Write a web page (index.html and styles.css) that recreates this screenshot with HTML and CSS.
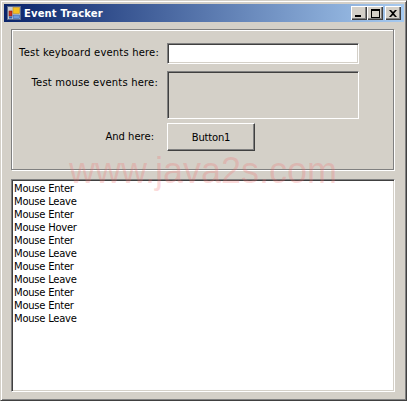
FILE: index.html
```html
<html>

<head>
    <link rel="stylesheet" href="styles.css">
</head>

<body>
    <div class="window">
        <div class="title-bar">
            <svg class="app-icon" viewBox="0 0 14 14" width="14" height="14">
                <rect x="0.5" y="0.5" width="13" height="13" fill="#c8ccd4" stroke="#5a6a8c"/>
                <rect x="6" y="1.5" width="6.500" height="6" fill="#f4c020" stroke="#c09020" stroke-width="0.6"/>
                <rect x="2" y="5" width="3" height="5" fill="#d03020" stroke="#802010" stroke-width="0.6"/>
                <rect x="2" y="10.500" width="3" height="2" fill="#3060b0"/>
                <rect x="6" y="9" width="6.500" height="3.500" fill="#6f9ad8" stroke="#3060b0" stroke-width="0.6"/>
            </svg>
            <span class="title-text">Event Tracker</span>
            <div class="caption-buttons">
                <button class="caption-btn" title="minimize"><span class="min-glyph"></span></button>
                <button class="caption-btn" title="maximize"><span class="max-glyph"></span></button>
                <button class="caption-btn close-btn" title="close">
                    <svg viewBox="0 0 8 7" width="8" height="7">
                        <path d="M0 0h2l2 2 2-2h2L5 3.500 8 7H6L4 5 2 7H0l3-3.500z" fill="#000"/>
                    </svg>
                </button>
            </div>
        </div>

        <div class="client">
            <div class="panel">
                <label class="form-label key-label">Test keyboard events here:</label>
                <input class="key-input" type="text">
                <label class="form-label mouse-label">Test mouse events here:</label>
                <div class="mouse-box"></div>
                <label class="form-label here-label">And here:</label>
                <button class="push-btn">Button1</button>
            </div>

            <div class="log-list">
                <div>Mouse Enter</div>
                <div>Mouse Leave</div>
                <div>Mouse Enter</div>
                <div>Mouse Hover</div>
                <div>Mouse Enter</div>
                <div>Mouse Leave</div>
                <div>Mouse Enter</div>
                <div>Mouse Leave</div>
                <div>Mouse Enter</div>
                <div>Mouse Enter</div>
                <div>Mouse Leave</div>
            </div>
        </div>
    </div>
    <div class="watermark">www.java2s.com</div>
</body>

</html>
```

FILE: styles.css
```css
html,
body {
    margin: 0;
    padding: 0;
}

body {
    width: 407px;
    height: 401px;
    overflow: hidden;
    font-family: "DejaVu Sans", sans-serif;
    font-size: 10px;
    color: #000;
}

.window {
    box-sizing: border-box;
    width: 407px;
    height: 401px;
    padding: 3px 2px 2px 3px;
    background: #d4d0c8;
    border: 1px solid;
    border-color: #d4d0c8 #404040 #404040 #d4d0c8;
    box-shadow: inset 1px 1px 0 #fff, inset -1px -1px 0 #808080;
    display: flex;
    flex-direction: column;
}

.title-bar {
    height: 18px;
    flex-shrink: 0;
    display: flex;
    align-items: center;
    background: linear-gradient(to right, #0a246a, #a6caf0);
    color: #fff;
}

.app-icon {
    margin-left: 3px;
    flex-shrink: 0;
}

.title-text {
    margin-left: 3px;
    font-weight: bold;
    font-size: 10px;
    letter-spacing: 0.15px;
}

.caption-buttons {
    margin-left: auto;
    margin-right: 3px;
    display: flex;
}

.caption-btn {
    box-sizing: border-box;
    width: 16px;
    height: 14px;
    padding: 0;
    border: none;
    background: #d4d0c8;
    box-shadow: inset 1px 1px 0 #fff, inset -1px -1px 0 #404040, inset -2px -2px 0 #808080;
    display: flex;
    align-items: center;
    justify-content: center;
}

.close-btn {
    margin-left: 2px;
}

.min-glyph {
    width: 6px;
    height: 2px;
    background: #000;
    margin-top: 6px;
    margin-right: 2px;
}

.max-glyph {
    box-sizing: border-box;
    width: 9px;
    height: 9px;
    border: 1px solid #000;
    border-top-width: 2px;
}

.client {
    flex-grow: 1;
    padding: 7px 9px 6px 7px;
    display: flex;
    flex-direction: column;
}

.panel {
    box-sizing: border-box;
    height: 141px;
    width: 383px;
    flex-shrink: 0;
    border: 1px solid #808080;
    box-shadow: inset 1px 1px 0 #fff, 1px 1px 0 #fff;
    display: grid;
    grid-template-columns: 140px 192px;
    grid-template-rows: 28px 52px 28px;
    column-gap: 8px;
    align-content: start;
    padding: 13px 0 0 7px;
}

.form-label {
    text-align: right;
    line-height: 20px;
    letter-spacing: 0.18px;
}

.mouse-label {
    padding-right: 1px;
    padding-top: 2px;
}

.here-label {
    padding-right: 5px;
    line-height: 28px;
    letter-spacing: 0;
}

.key-input,
.mouse-box {
    box-sizing: border-box;
    width: 192px;
    background: #fff;
    border: 1px solid;
    border-color: #808080 #fff #fff #808080;
    box-shadow: inset 1px 1px 0 #404040, inset -1px -1px 0 #d4d0c8;
    padding: 0;
    margin: 0;
    outline: none;
}

.key-input {
    height: 21px;
}

.mouse-box {
    height: 48px;
    background: #d4d0c8;
}

.push-btn {
    box-sizing: border-box;
    width: 88px;
    height: 28px;
    padding: 0;
    font-family: inherit;
    font-size: 10px;
    letter-spacing: -0.2px;
    color: #000;
    background: #d4d0c8;
    border: 1px solid;
    border-color: #fff #404040 #404040 #fff;
    box-shadow: inset -1px -1px 0 #808080;
}

.log-list {
    box-sizing: border-box;
    flex-grow: 1;
    margin-top: 9px;
    background: #fff;
    border: 1px solid;
    border-color: #808080 #fff #fff #808080;
    box-shadow: inset 1px 1px 0 #404040, inset -1px -1px 0 #d4d0c8;
    padding: 2px 2px;
    line-height: 13px;
    letter-spacing: -0.25px;
}

/* stamped across the picture */
.watermark {
    position: absolute;
    left: 69px;
    top: 150px;
    font-family: "Liberation Sans", sans-serif;
    font-size: 36px;
    line-height: 42px;
    white-space: nowrap;
    color: rgba(240, 110, 110, 0.25);
}
```
